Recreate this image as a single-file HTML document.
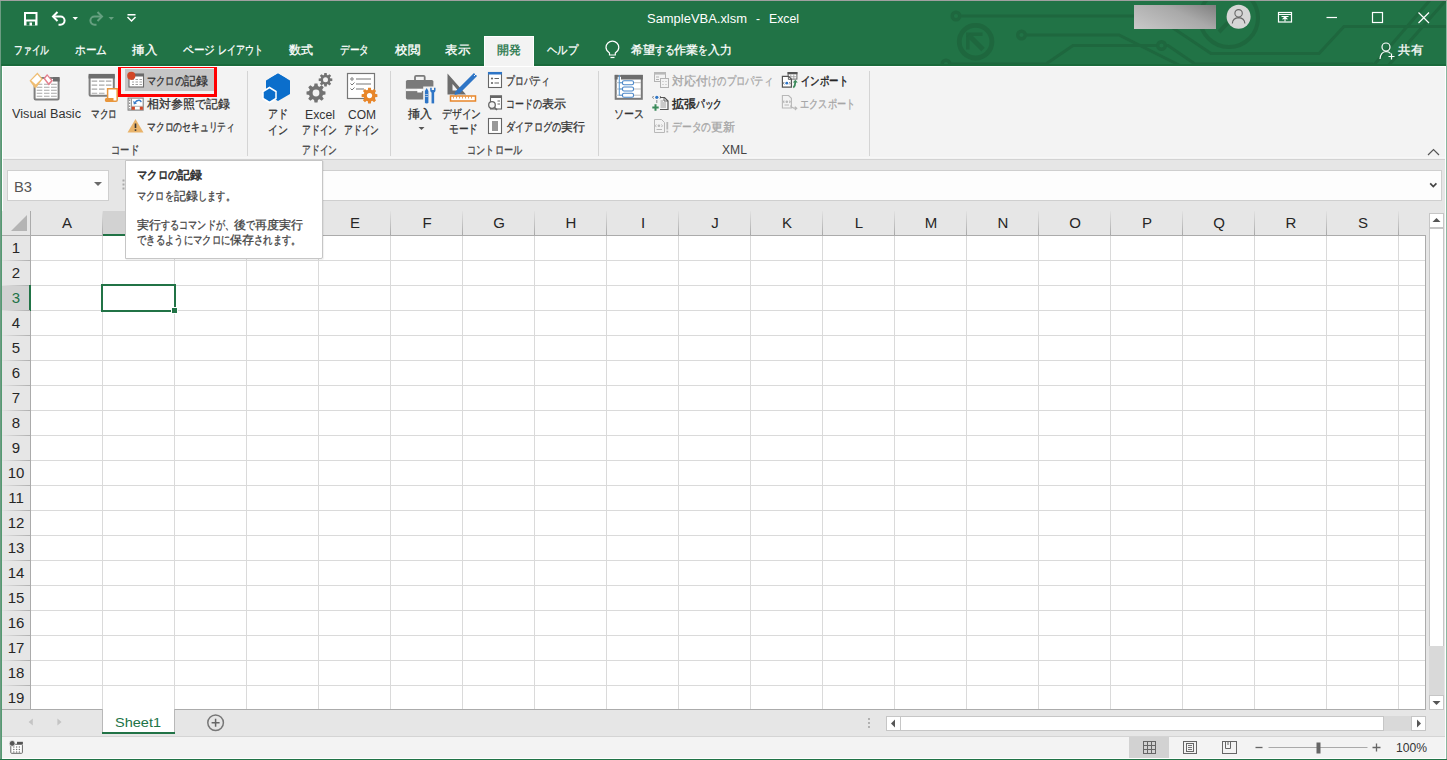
<!DOCTYPE html>
<html lang="ja"><head><meta charset="utf-8"><style>
*{box-sizing:border-box}
html,body{margin:0;padding:0;width:1447px;height:760px;overflow:hidden;background:#fff}
body{position:relative;font-family:"Liberation Sans",sans-serif;font-size:12px;color:#262626}
.a{position:absolute}
svg.a{overflow:visible}
.t{position:absolute;white-space:nowrap;line-height:1;transform-origin:0 0}
.j{-webkit-text-stroke:0.3px currentColor}
</style></head><body>
<div class="a" style="left:0;top:0;width:1447px;height:66px;background:#217346"></div>
<svg class="a" style="left:0;top:0" width="1447" height="66" fill="none" stroke="#1e673e" stroke-width="3">
<circle cx="956" cy="16" r="3.8" stroke-width="3.4"/>
<path d="M960.5 16 H1155 L1211 53.5 H1319 L1344 26.5 H1447"/>
<circle cx="975.6" cy="41.7" r="16.3" stroke-width="4.8"/>
<path d="M967.8 49.5 V34.3 H982.5" stroke-width="3.6"/>
<path d="M968.5 35 L983 49.5" stroke-width="5"/>
<circle cx="1021.5" cy="35" r="3.8" stroke-width="3.4"/>
<path d="M1026 35 H1119 L1181 66"/>
<circle cx="946" cy="64" r="3.8" stroke-width="3.4"/>
<path d="M950.5 64 H1046 L1073 45.5 H1157 M1166 45.5 H1168 L1195 64 H1373"/>
<circle cx="1161.5" cy="45.5" r="3.8" stroke-width="3.4"/>
<circle cx="1229" cy="18" r="29" stroke-width="4"/>
<path d="M1219 32 L1240 10" stroke-width="4"/>
<path d="M1373 66 L1430 0 M1388 66 L1446 0"/>
</svg>
<div class="a" style="left:0;top:0;width:1447px;height:1px;background:#a0a0a0"></div>
<svg class="a" style="left:0;top:0" width="150" height="33">
<path d="M24 12 H37.5 V25.5 H24 Z" fill="#fff"/>
<rect x="26" y="14" width="9.5" height="5.5" fill="#217346"/>
<rect x="26.5" y="21.5" width="8.5" height="4" fill="#217346"/>
<rect x="29.5" y="22.5" width="2.5" height="3" fill="#fff"/>
<path d="M53.5 16.5 H60.5 A4.1 4.1 0 0 1 60.5 24.7 H58.5" fill="none" stroke="#fff" stroke-width="2"/>
<path d="M57.5 12 L53 16.5 L57.5 21" fill="none" stroke="#fff" stroke-width="2"/>
<path d="M72.5 17 H78 L75.25 20 Z" fill="#fff"/>
<path d="M101.5 16.5 H94.5 A4.1 4.1 0 0 0 94.5 24.7 H96.5" fill="none" stroke="#66a080" stroke-width="2"/>
<path d="M97.5 12 L102 16.5 L97.5 21" fill="none" stroke="#66a080" stroke-width="2"/>
<path d="M108.5 17 H114 L111.25 20 Z" fill="#66a080"/>
<rect x="127.5" y="14" width="8" height="1.5" fill="#fff"/>
<path d="M127.5 17 L131.5 21 L135.5 17" fill="none" stroke="#fff" stroke-width="1.5"/>
</svg>
<span class="t" style="left:647px;top:13px;font-size:12px;color:#fff;transform:scaleX(1.0787);">SampleVBA.xlsm</span>
<span class="t" style="left:756px;top:13px;font-size:12px;color:#fff;">-</span>
<span class="t" style="left:769px;top:13px;font-size:12px;color:#fff;transform:scaleX(1.0224);">Excel</span>
<div class="a" style="left:1134px;top:5px;width:82px;height:24px;background:linear-gradient(205deg,#7f7f7f 0%,#a9a9a9 40%,#c9c9c9 100%)"></div>
<svg class="a" style="left:1220px;top:0" width="40" height="34">
<circle cx="18.6" cy="16.8" r="12" fill="#d6d6d6"/>
<circle cx="18.6" cy="13.3" r="3.7" fill="none" stroke="#666" stroke-width="1.1"/>
<path d="M12.3 23.5 Q12.8 17.8 18.6 17.6 Q24.4 17.8 24.9 23.5" fill="none" stroke="#666" stroke-width="1.1"/>
</svg>
<svg class="a" style="left:1270px;top:0" width="177" height="66" fill="none" stroke="#fff">
<rect x="8.5" y="12.5" width="13" height="9.5" stroke-width="1.2"/>
<path d="M9 14.5 H21.5" stroke-width="1"/>
<path d="M11.5 16.5 H18.5 M15 21.5 V17 M12.6 19.3 L15 16.9 L17.4 19.3" stroke-width="1.1"/>
<path d="M56.5 17.5 H67" stroke-width="1.2"/>
<rect x="102.5" y="12.5" width="10" height="10" stroke-width="1.2"/>
<path d="M148.5 12.5 L159 23 M159 12.5 L148.5 23" stroke-width="1.2"/>
<circle cx="116" cy="47" r="4" stroke-width="1.2"/>
<path d="M110 59 Q110.5 52 116 51.5 Q119 51.5 120.5 53.5" stroke-width="1.2"/>
<path d="M118.5 56.5 H124.5 M121.5 53.5 V59.5" stroke-width="1.2"/>
</svg>
<span class="t j" style="left:1398px;top:44px;font-size:12px;color:#fff;transform:scaleX(1.0417);">共有</span>
<span class="t j" style="left:14px;top:44px;font-size:12px;color:#fff;"><span style="display:inline-block;width:35.00px"><span style="display:inline-block;transform:scaleX(0.7292);transform-origin:0 0">ファイル</span></span></span>
<span class="t j" style="left:75px;top:44px;font-size:12px;color:#fff;"><span style="display:inline-block;width:32.00px"><span style="display:inline-block;transform:scaleX(0.8889);transform-origin:0 0">ホーム</span></span></span>
<span class="t j" style="left:132px;top:44px;font-size:12px;color:#fff;transform:scaleX(1.0417);">挿入</span>
<span class="t j" style="left:183px;top:44px;font-size:12px;color:#fff;"><span style="display:inline-block;width:32.00px"><span style="display:inline-block;transform:scaleX(0.8889);transform-origin:0 0">ページ</span></span></span>
<span class="t j" style="left:218px;top:44px;font-size:12px;color:#fff;"><span style="display:inline-block;width:45.00px"><span style="display:inline-block;transform:scaleX(0.7500);transform-origin:0 0">レイアウト</span></span></span>
<span class="t j" style="left:289px;top:44px;font-size:12px;color:#fff;transform:scaleX(1.0000);">数式</span>
<span class="t j" style="left:340px;top:44px;font-size:12px;color:#fff;"><span style="display:inline-block;width:29.00px"><span style="display:inline-block;transform:scaleX(0.8056);transform-origin:0 0">データ</span></span></span>
<span class="t j" style="left:395px;top:44px;font-size:12px;color:#fff;transform:scaleX(1.0417);">校閲</span>
<span class="t j" style="left:445px;top:44px;font-size:12px;color:#fff;transform:scaleX(1.0417);">表示</span>
<span class="t j" style="left:547px;top:44px;font-size:12px;color:#fff;"><span style="display:inline-block;width:31.00px"><span style="display:inline-block;transform:scaleX(0.8611);transform-origin:0 0">ヘルプ</span></span></span>
<svg class="a" style="left:600px;top:36px" width="24" height="26" fill="none" stroke="#fff" stroke-width="1.2">
<path d="M9.5 19 V17 Q6 14.5 6 11.5 A6.4 6.4 0 0 1 18.8 11.5 Q18.8 14.5 15.3 17 V19 Z"/>
<path d="M10.5 21.5 H14.5"/>
</svg>
<span class="t j" style="left:631px;top:44px;font-size:12px;color:#fff;">希望<span style="display:inline-block;width:19.33px"><span style="display:inline-block;transform:scaleX(0.8056);transform-origin:0 0">する</span></span>作業<span style="display:inline-block;width:9.67px"><span style="display:inline-block;transform:scaleX(0.8056);transform-origin:0 0">を</span></span>入力</span>
<div class="a" style="left:0;top:65px;width:1447px;height:94px;background:#f3f3f3"></div>
<div class="a" style="left:0;top:159px;width:1447px;height:1px;background:#d2d2d2"></div>
<div class="a" style="left:0;top:157px;width:1447px;height:1px;background:#f7f7f7"></div>
<div class="a" style="left:247px;top:71px;width:1px;height:85px;background:#d4d4d4"></div>
<div class="a" style="left:390px;top:71px;width:1px;height:85px;background:#d4d4d4"></div>
<div class="a" style="left:598px;top:71px;width:1px;height:85px;background:#d4d4d4"></div>
<div class="a" style="left:869px;top:71px;width:1px;height:85px;background:#d4d4d4"></div>
<span class="t j" style="left:111px;top:144px;font-size:12px;color:#444;"><span style="display:inline-block;width:28.00px"><span style="display:inline-block;transform:scaleX(0.7778);transform-origin:0 0">コード</span></span></span>
<span class="t j" style="left:302px;top:144px;font-size:12px;color:#444;"><span style="display:inline-block;width:35.00px"><span style="display:inline-block;transform:scaleX(0.7292);transform-origin:0 0">アドイン</span></span></span>
<span class="t j" style="left:467px;top:144px;font-size:12px;color:#444;"><span style="display:inline-block;width:55.00px"><span style="display:inline-block;transform:scaleX(0.7639);transform-origin:0 0">コントロール</span></span></span>
<span class="t" style="left:722px;top:144px;font-size:12px;color:#444;transform:scaleX(1.0127);">XML</span>
<svg class="a" style="left:1426px;top:146px" width="16" height="12"><path d="M2 9 L7.5 3.5 L13 9" fill="none" stroke="#555" stroke-width="1.2"/></svg>
<svg class="a" style="left:0;top:0" width="130" height="110">
<rect x="34.6" y="78" width="24" height="21.5" rx="1" fill="#fff" stroke="#7f7f7f" stroke-width="2"/>
<rect x="53" y="77" width="6.6" height="4.5" fill="#6d6d6d"/>
<path d="M36.7 84.2 H42.3 M44 84.2 H49.5 M51 84.2 H56.8 M36.7 87.2 H42.3 M44 87.2 H49.5 M51 87.2 H56.8 M36.7 90.3 H42.3 M44 90.3 H49.5 M51 90.3 H56.8 M36.7 93.2 H42.3 M44 93.2 H49.5 M51 93.2 H56.8 M36.7 96.2 H42.3 M44 96.2 H49.5 M51 96.2 H56.8" stroke="#a8a8a8" stroke-width="1.1"/>
<path d="M37.4 72.5 L42.8 79 L35.4 88.7 L29.5 80.8 Z" fill="#efbd72"/>
<path d="M37.3 74.6 L41.2 79 L35.8 84.5 L31.3 80.5 Z" fill="#fff"/>
<path d="M47.1 73.9 L53 80.8 L48.8 85.6 L43.3 78.4 Z" fill="#e47f8e"/>
<path d="M47.2 76 L51 80.6 L48.7 83 L45.2 78.4 Z" fill="#fff"/>
<rect x="89.6" y="74.9" width="24.2" height="20.8" rx="1" fill="#fff" stroke="#7f7f7f" stroke-width="2"/>
<rect x="88.6" y="73.9" width="26.2" height="4.6" fill="#6d6d6d"/>
<path d="M91.7 81.1 H97.2 M99 81.1 H104.5 M105.9 81.1 H111.4 M91.7 85.1 H97.2 M99 85.1 H104.5 M105.9 85.1 H111.4 M91.7 89.1 H97.2 M99 89.1 H104.5 M91.7 93.2 H97.2 M99 93.2 H104.5" stroke="#a8a8a8" stroke-width="1.1"/>
<path d="M107.6 88.8 H117.2 V100 Q117.2 101.3 116 101.3 H107.6 Z" fill="#fff" stroke="#e8963c" stroke-width="1.5"/>
<path d="M106.3 98 H113.5 V101.9 H106.3 Q104.8 101.9 104.8 100 Q104.8 98 106.3 98 Z" fill="#e8963c"/>
</svg>
<span class="t" style="left:12px;top:108px;font-size:12px;color:#333;transform:scaleX(1.0590);">Visual Basic</span>
<span class="t j" style="left:91px;top:108px;font-size:12px;color:#333;"><span style="display:inline-block;width:26.00px"><span style="display:inline-block;transform:scaleX(0.7222);transform-origin:0 0">マクロ</span></span></span>
<div class="a" style="left:118px;top:65px;width:99px;height:32px;border:3px solid #ff0000"></div>
<div class="a" style="left:125px;top:69px;width:89px;height:22px;background:#c6c6c6"></div>
<svg class="a" style="left:126px;top:70px" width="20" height="20">
<rect x="3" y="4" width="14.5" height="13" fill="#fff" stroke="#6b6b6b" stroke-width="1.1"/>
<rect x="3" y="4" width="14.5" height="2.5" fill="#6b6b6b"/>
<path d="M6 9.5 H8 M9.5 9.5 H12 M13.5 9.5 H16 M6 12 H8 M9.5 12 H12 M13.5 12 H16 M6 14.5 H8 M9.5 14.5 H12 M13.5 14.5 H16" stroke="#999" stroke-width="0.9"/>
<circle cx="5.3" cy="5.8" r="4.1" fill="#d24726"/>
</svg>
<span class="t j" style="left:147px;top:75px;font-size:12px;color:#333;"><span style="display:inline-block;width:37.00px"><span style="display:inline-block;transform:scaleX(0.7708);transform-origin:0 0">マクロの</span></span>記録</span>
<svg class="a" style="left:0;top:0" width="150" height="115">
<rect x="128.1" y="98.1" width="15.1" height="12" fill="#fff" stroke="#808080" stroke-width="1.1"/>
<path d="M131.3 98.5 V110" stroke="#808080" stroke-width="1"/>
<path d="M129.6 99.5 V101 M129.6 102.5 V104 M129.6 105.5 V107 M129.6 108.3 V109.5" stroke="#909090" stroke-width="1.3"/>
<path d="M131.5 106.3 H142.8" stroke="#a0a0a0" stroke-width="0.8"/>
<rect x="131.7" y="106.7" width="3.2" height="3.1" fill="#d24726"/>
<rect x="139.8" y="106.7" width="3.1" height="3.1" fill="#d24726"/>
<path d="M134.6 103.2 Q136.5 100 139.2 100.3 Q140.8 100.6 141.2 102.2" fill="none" stroke="#3b7dc9" stroke-width="1.4"/>
<path d="M133.2 100.8 L133.8 104.6 L137 103.4 Z" fill="#3b7dc9"/>
</svg>
<span class="t j" style="left:147px;top:98px;font-size:12px;color:#333;">相対参照<span style="display:inline-block;width:11.00px"><span style="display:inline-block;transform:scaleX(0.9167);transform-origin:0 0">で</span></span>記録</span>
<svg class="a" style="left:126px;top:116px" width="20" height="18">
<path d="M9.5 3 L17.5 16.5 H1.5 Z" fill="#e9b36a"/>
<path d="M9.5 7.5 V12" stroke="#333" stroke-width="1.6"/>
<rect x="8.7" y="13.3" width="1.6" height="1.6" fill="#333"/>
</svg>
<span class="t j" style="left:147px;top:121px;font-size:12px;color:#333;"><span style="display:inline-block;width:88.00px"><span style="display:inline-block;transform:scaleX(0.7333);transform-origin:0 0">マクロのセキュリティ</span></span></span>
<svg class="a" style="left:258px;top:70px" width="36" height="34">
<path d="M20 3.5 L28.5 8.5 V19 L20 24.5 L11.5 19 V8.5 Z" fill="#0b6ecb" transform="translate(0,0) scale(1)"/>
<path d="M20 3.5 L32 10.5 V24 L20 31 L8 24 V10.5 Z" fill="#0b6ecb"/>
<path d="M11.5 17.5 L18 21.5 V28.5 L11.5 32.5 L5 28.5 V21.5 Z" fill="#0b6ecb" stroke="#fff" stroke-width="1.5"/>
</svg>
<span class="t j" style="left:268px;top:108px;font-size:12px;color:#333;"><span style="display:inline-block;width:20.00px"><span style="display:inline-block;transform:scaleX(0.8333);transform-origin:0 0">アド</span></span></span>
<span class="t j" style="left:268px;top:124px;font-size:12px;color:#333;"><span style="display:inline-block;width:20.00px"><span style="display:inline-block;transform:scaleX(0.8333);transform-origin:0 0">イン</span></span></span>
<svg class="a" style="left:0;top:0" width="400" height="110">
<polygon points="313.98,86.40 314.50,83.52 317.50,83.52 318.02,86.40 319.24,86.91 321.64,85.23 323.77,87.36 322.09,89.76 322.60,90.98 325.48,91.50 325.48,94.50 322.60,95.02 322.09,96.24 323.77,98.64 321.64,100.77 319.24,99.09 318.02,99.60 317.50,102.48 314.50,102.48 313.98,99.60 312.76,99.09 310.36,100.77 308.23,98.64 309.91,96.24 309.40,95.02 306.52,94.50 306.52,91.50 309.40,90.98 309.91,89.76 308.23,87.36 310.36,85.23 312.76,86.91" fill="#737373"/><circle cx="316" cy="93" r="7" fill="#737373"/><circle cx="316" cy="93" r="3.4" fill="#f3f3f3"/>
<polygon points="324.02,75.23 324.30,73.00 326.70,73.00 326.98,75.23 327.68,75.52 329.46,74.15 331.15,75.84 329.78,77.62 330.07,78.32 332.30,78.60 332.30,81.00 330.07,81.28 329.78,81.98 331.15,83.76 329.46,85.45 327.68,84.08 326.98,84.37 326.70,86.60 324.30,86.60 324.02,84.37 323.32,84.08 321.54,85.45 319.85,83.76 321.22,81.98 320.93,81.28 318.70,81.00 318.70,78.60 320.93,78.32 321.22,77.62 319.85,75.84 321.54,74.15 323.32,75.52" fill="#737373"/><circle cx="325.5" cy="79.8" r="4.8" fill="#737373"/><circle cx="325.5" cy="79.8" r="2.5" fill="#f3f3f3"/>
</svg>
<span class="t" style="left:305px;top:109px;font-size:12px;color:#333;transform:scaleX(1.0224);">Excel</span>
<span class="t j" style="left:302px;top:124px;font-size:12px;color:#333;"><span style="display:inline-block;width:35.00px"><span style="display:inline-block;transform:scaleX(0.7292);transform-origin:0 0">アドイン</span></span></span>
<svg class="a" style="left:343px;top:70px" width="40" height="34">
<rect x="4.5" y="3.5" width="27" height="25" fill="#fff" stroke="#777" stroke-width="1.2"/>
<circle cx="9" cy="9" r="1.2" fill="none" stroke="#777"/>
<path d="M13 9 H28 M13 14 H28 M13 19 H21" stroke="#777" stroke-width="1.1"/>
<path d="M7.5 13.5 L9 15 L11.5 12.5 M7.5 18.5 L9 20 L11.5 17.5" fill="none" stroke="#777" stroke-width="1"/>
<polygon points="24.77,20.27 25.11,17.72 27.89,17.72 28.23,20.27 29.04,20.61 31.09,19.05 33.05,21.01 31.49,23.06 31.83,23.87 34.38,24.21 34.38,26.99 31.83,27.33 31.49,28.14 33.05,30.19 31.09,32.15 29.04,30.59 28.23,30.93 27.89,33.48 25.11,33.48 24.77,30.93 23.96,30.59 21.91,32.15 19.95,30.19 21.51,28.14 21.17,27.33 18.62,26.99 18.62,24.21 21.17,23.87 21.51,23.06 19.95,21.01 21.91,19.05 23.96,20.61" fill="#e8862a"/><circle cx="26.5" cy="25.6" r="5.8" fill="#e8862a"/>
<circle cx="26.5" cy="25.6" r="2.6" fill="#fff"/>
</svg>
<span class="t" style="left:348px;top:109px;font-size:12px;color:#333;transform:scaleX(1.0000);">COM</span>
<span class="t j" style="left:344px;top:124px;font-size:12px;color:#333;"><span style="display:inline-block;width:35.00px"><span style="display:inline-block;transform:scaleX(0.7292);transform-origin:0 0">アドイン</span></span></span>
<svg class="a" style="left:0;top:0" width="450" height="110">
<path d="M415 80 V77 Q415 75.9 416.1 75.9 H423.6 Q424.7 75.9 424.7 77 V80" fill="none" stroke="#7a7a7a" stroke-width="1.8"/>
<rect x="405.9" y="80" width="27.5" height="19.4" rx="1.6" fill="#7a7a7a"/>
<rect x="405.9" y="88.7" width="27.5" height="2.4" fill="#f3f3f3"/>
<rect x="417.3" y="89" width="4.5" height="3.5" fill="#fff"/>
<path d="M423.2 86.5 H437 V104.5 H423.2 Z" fill="#f3f3f3"/>
<path d="M426.65 88 L428.4 91 V102.2 Q428.4 103.4 426.65 103.4 Q424.9 103.4 424.9 102.2 V91 Z" fill="#2e75c6"/>
<path d="M425.3 94.5 H428 M425.3 96.5 H428" stroke="#f3f3f3" stroke-width="0.6"/>
<path d="M432.85 92 V103.4" stroke="#2e75c6" stroke-width="2.6"/>
<path d="M430.2 87.8 V90.2 Q430.2 92.6 432.85 92.6 Q435.5 92.6 435.5 90.2 V87.8 H434 V90 H431.7 V87.8 Z" fill="#2e75c6"/>
</svg>
<span class="t j" style="left:408px;top:108px;font-size:12px;color:#333;transform:scaleX(1.0000);">挿入</span>
<svg class="a" style="left:418px;top:126px" width="8" height="6"><path d="M0.5 1 H6.5 L3.5 4 Z" fill="#555"/></svg>
<svg class="a" style="left:444px;top:70px" width="40" height="36">
<path d="M3.5 3.5 L22 24.5 H3.5 Z M8.5 14 V20.5 H14 Z" fill="#6d6d6d" fill-rule="evenodd"/>
<rect x="6.5" y="26" width="25" height="5" fill="#fff" stroke="#e8862a" stroke-width="1.5"/>
<path d="M9.5 26.5 V28.5 M12.5 26.5 V28.5 M15.5 26.5 V28.5 M18.5 26.5 V28.5 M21.5 26.5 V28.5 M24.5 26.5 V28.5 M27.5 26.5 V28.5" stroke="#e8862a" stroke-width="0.8"/>
<path d="M31.5 4.5 L13.5 22.5" stroke="#2e75c6" stroke-width="4.5"/>
<path d="M11.5 21 L10.5 25 L14.5 24" fill="#2e75c6"/>
<path d="M30 6 L33 3" stroke="#f3f3f3" stroke-width="1"/>
</svg>
<span class="t j" style="left:442px;top:108px;font-size:12px;color:#333;"><span style="display:inline-block;width:39.00px"><span style="display:inline-block;transform:scaleX(0.8125);transform-origin:0 0">デザイン</span></span></span>
<span class="t j" style="left:449px;top:123px;font-size:12px;color:#333;"><span style="display:inline-block;width:29.00px"><span style="display:inline-block;transform:scaleX(0.8056);transform-origin:0 0">モード</span></span></span>
<svg class="a" style="left:485px;top:70px" width="20" height="66">
<rect x="3.5" y="2.5" width="13" height="15" fill="#fff" stroke="#666" stroke-width="1.1"/>
<rect x="3" y="2" width="14" height="2.5" fill="#2e75c6"/>
<circle cx="7" cy="8.5" r="1.1" fill="#666"/><circle cx="7" cy="13" r="1.1" fill="#666"/>
<path d="M9.5 8.5 H14 M9.5 13 H14" stroke="#666" stroke-width="1.1"/>
<rect x="5.5" y="26" width="11" height="13" fill="#fff" stroke="#666" stroke-width="1.1"/>
<rect x="5" y="25.5" width="12" height="2.5" fill="#666"/>
<path d="M12.5 31 H15 M12.5 34 H15" stroke="#666" stroke-width="1"/>
<circle cx="7" cy="35" r="3.3" fill="#f3f3f3" stroke="#666" stroke-width="1.3"/>
<path d="M9.3 37.3 L12 40" stroke="#666" stroke-width="1.6"/>
<rect x="3.5" y="48.5" width="13" height="15" fill="#fff" stroke="#666" stroke-width="1.1"/>
<rect x="7" y="51" width="6" height="10" fill="#9a9a9a"/>
</svg>
<span class="t j" style="left:506px;top:75px;font-size:12px;color:#333;"><span style="display:inline-block;width:44.00px"><span style="display:inline-block;transform:scaleX(0.7333);transform-origin:0 0">プロパティ</span></span></span>
<span class="t j" style="left:506px;top:98px;font-size:12px;color:#333;"><span style="display:inline-block;width:36.00px"><span style="display:inline-block;transform:scaleX(0.7500);transform-origin:0 0">コードの</span></span>表示</span>
<span class="t j" style="left:506px;top:121px;font-size:12px;color:#333;"><span style="display:inline-block;width:55.00px"><span style="display:inline-block;transform:scaleX(0.7639);transform-origin:0 0">ダイアログの</span></span>実行</span>
<svg class="a" style="left:0;top:0" width="700" height="110">
<rect x="615.7" y="75.9" width="26.1" height="22.9" fill="#fff" stroke="#7a7a7a" stroke-width="2"/>
<rect x="621" y="74.9" width="21.8" height="4.6" fill="#6d6d6d"/>
<rect x="614.7" y="74.9" width="3" height="4.6" fill="#6d6d6d"/>
<path d="M616 82.7 H641 M616 89 H641 M616 95.2 H641" stroke="#bdbdbd" stroke-width="1"/>
<path d="M619.3 75 V95.2 H622.5 M619.3 82.7 H622.5 M619.3 89 H622.5" fill="none" stroke="#5b9bd5" stroke-width="1.1"/>
<rect x="622.5" y="80.7" width="11" height="4" rx="1.5" fill="#fff" stroke="#4a86c8" stroke-width="1.1"/>
<rect x="622.5" y="87" width="11" height="4" rx="1.5" fill="#fff" stroke="#4a86c8" stroke-width="1.1"/>
<rect x="622.5" y="93.2" width="11" height="4" rx="1.5" fill="#fff" stroke="#4a86c8" stroke-width="1.1"/>
</svg>
<span class="t j" style="left:614px;top:108px;font-size:12px;color:#333;"><span style="display:inline-block;width:30.00px"><span style="display:inline-block;transform:scaleX(0.8333);transform-origin:0 0">ソース</span></span></span>
<svg class="a" style="left:0;top:0" width="700" height="140">
<g fill="none" stroke="#b3b3b3" stroke-width="1">
<rect x="654.5" y="72.5" width="11" height="9"/>
<rect x="660.5" y="78.5" width="8" height="9" fill="#f3f3f3"/>
<path d="M656 77 H659 M656 79.5 H659 M662.5 81.5 H663.5 M665.5 81.5 H666.5 M662.5 84.5 H663.5 M665.5 84.5 H666.5"/>
</g>
<rect x="654" y="72" width="12" height="2.6" fill="#b8b8b8"/>
<path d="M653.5 96 L652.6 97.3 L653.5 98.6 M660 96 L660.9 97.3 L660 98.6" fill="none" stroke="#666" stroke-width="0.9"/>
<circle cx="656.8" cy="97.3" r="1.6" fill="#2e75c6"/>
<path d="M656.8 100 V103" stroke="#888" stroke-width="1"/>
<path d="M660 97.5 H664.5 L668 101 V109.5 H660" fill="none" stroke="#555" stroke-width="1.2"/>
<path d="M664 97.5 V101 H668" fill="none" stroke="#555" stroke-width="0.9"/>
<path d="M660.5 101 H663 M660.5 103 H666 M660.5 105 H666 M660.5 107 H666" stroke="#888" stroke-width="0.8"/>
<path d="M655.5 104.3 V110.7 M652.3 107.5 H658.7" stroke="#3a8a5a" stroke-width="2"/>
<g fill="none" stroke="#b8b8b8" stroke-width="1">
<path d="M654.5 119.5 H661.5 L664.5 122.5 V132.5 H654.5 Z"/>
<path d="M656.3 124.5 L655.4 125.8 L656.3 127.1 M661.5 124.5 L662.4 125.8 L661.5 127.1 M656.5 129.5 H662"/>
</g>
<circle cx="658.9" cy="125.8" r="1.3" fill="#b8b8b8"/>
<path d="M667.3 122 V129.5" stroke="#b8b8b8" stroke-width="1.8"/><rect x="666.4" y="130.7" width="1.8" height="1.8" fill="#b8b8b8"/>
</svg>
<span class="t j" style="left:672px;top:75px;font-size:12px;color:#a6a6a6;">対応付<span style="display:inline-block;width:65.00px"><span style="display:inline-block;transform:scaleX(0.7738);transform-origin:0 0">けのプロパティ</span></span></span>
<span class="t j" style="left:672px;top:98px;font-size:12px;color:#262626;-webkit-text-stroke:0.45px currentColor">拡張<span style="display:inline-block;width:26.00px"><span style="display:inline-block;transform:scaleX(0.7222);transform-origin:0 0">パック</span></span></span>
<span class="t j" style="left:672px;top:121px;font-size:12px;color:#a6a6a6;"><span style="display:inline-block;width:39.00px"><span style="display:inline-block;transform:scaleX(0.8125);transform-origin:0 0">データの</span></span>更新</span>
<svg class="a" style="left:0;top:0" width="810" height="115">
<rect x="788.1" y="72.5" width="8.8" height="6.6" fill="#fff" stroke="#666" stroke-width="1"/>
<rect x="787.6" y="72" width="9.8" height="2.3" fill="#555"/>
<path d="M790.8 74.5 V79 M793.8 74.5 V79 M788.5 76.7 H796.5" stroke="#999" stroke-width="0.8"/>
<path d="M782.4 76.4 H788.6 L791.4 79.2 V87.2 H782.4 Z" fill="#fff" stroke="#555" stroke-width="1.2"/>
<path d="M788.4 76.5 V79.4 H791.3" fill="none" stroke="#555" stroke-width="0.9"/>
<path d="M784.3 82 L783.3 83.2 L784.3 84.4 M789.3 82 L790.3 83.2 L789.3 84.4" fill="none" stroke="#666" stroke-width="0.9"/>
<circle cx="786.8" cy="83.2" r="1.4" fill="#2e75c6"/>
<path d="M793.3 87.6 Q795.3 86 795.3 82" fill="none" stroke="#3a8a5a" stroke-width="1.8"/>
<path d="M792.8 82.6 L795.3 79.8 L797.8 82.6 Z" fill="#3a8a5a"/>
<g fill="none" stroke="#b8b8b8" stroke-width="1.1">
<path d="M782.4 95.5 H788.6 L791.4 98.3 V108 H782.4 Z"/>
<path d="M784.3 100.6 L783.3 101.8 L784.3 103 M789.3 100.6 L790.3 101.8 L789.3 103 M784.5 105 H789"/>
<path d="M790.5 105.5 Q791.5 108.3 796 108.3 M794.8 106.6 L796.8 108.3 L794.8 110"/>
</g>
<circle cx="786.8" cy="101.8" r="1.3" fill="#b8b8b8"/>
</svg>
<span class="t j" style="left:801px;top:75px;font-size:12px;color:#262626;-webkit-text-stroke:0.45px currentColor"><span style="display:inline-block;width:47.00px"><span style="display:inline-block;transform:scaleX(0.7833);transform-origin:0 0">インポート</span></span></span>
<span class="t j" style="left:800px;top:98px;font-size:12px;color:#a6a6a6;"><span style="display:inline-block;width:55.00px"><span style="display:inline-block;transform:scaleX(0.7639);transform-origin:0 0">エクスポート</span></span></span>
<div class="a" style="left:0;top:160px;width:1447px;height:51px;background:#e6e6e6"></div>
<div class="a" style="left:7px;top:170px;width:102px;height:31px;background:#fdfdfd;border:1px solid #cfcfcf"></div>
<span class="t" style="left:14px;top:179px;font-size:15px;color:#555;transform:scaleX(0.9804);">B3</span>
<div class="a" style="left:94px;top:182px;width:0;height:0;border-left:4px solid transparent;border-right:4px solid transparent;border-top:4px solid #6a6a6a"></div>
<svg class="a" style="left:121px;top:178px" width="5" height="14"><rect x="1.5" y="1.5" width="2" height="2" fill="#aaa"/><rect x="1.5" y="5.5" width="2" height="2" fill="#aaa"/><rect x="1.5" y="9.5" width="2" height="2" fill="#aaa"/></svg>
<div class="a" style="left:196px;top:170px;width:1246px;height:31px;background:#fdfdfd;border:1px solid #cfcfcf"></div>
<svg class="a" style="left:1425px;top:180px" width="14" height="10"><path d="M5.2 3.3 L8.3 6.5 L11.4 3.3" fill="none" stroke="#444" stroke-width="1.7"/></svg>
<div class="a" style="left:31px;top:236px;width:1395px;height:474px;background:#fff"></div>
<div class="a" style="left:102px;top:236px;width:1px;height:474px;background:#dadada"></div>
<div class="a" style="left:174px;top:236px;width:1px;height:474px;background:#dadada"></div>
<div class="a" style="left:246px;top:236px;width:1px;height:474px;background:#dadada"></div>
<div class="a" style="left:318px;top:236px;width:1px;height:474px;background:#dadada"></div>
<div class="a" style="left:390px;top:236px;width:1px;height:474px;background:#dadada"></div>
<div class="a" style="left:462px;top:236px;width:1px;height:474px;background:#dadada"></div>
<div class="a" style="left:534px;top:236px;width:1px;height:474px;background:#dadada"></div>
<div class="a" style="left:606px;top:236px;width:1px;height:474px;background:#dadada"></div>
<div class="a" style="left:678px;top:236px;width:1px;height:474px;background:#dadada"></div>
<div class="a" style="left:750px;top:236px;width:1px;height:474px;background:#dadada"></div>
<div class="a" style="left:822px;top:236px;width:1px;height:474px;background:#dadada"></div>
<div class="a" style="left:894px;top:236px;width:1px;height:474px;background:#dadada"></div>
<div class="a" style="left:966px;top:236px;width:1px;height:474px;background:#dadada"></div>
<div class="a" style="left:1038px;top:236px;width:1px;height:474px;background:#dadada"></div>
<div class="a" style="left:1110px;top:236px;width:1px;height:474px;background:#dadada"></div>
<div class="a" style="left:1182px;top:236px;width:1px;height:474px;background:#dadada"></div>
<div class="a" style="left:1254px;top:236px;width:1px;height:474px;background:#dadada"></div>
<div class="a" style="left:1326px;top:236px;width:1px;height:474px;background:#dadada"></div>
<div class="a" style="left:1398px;top:236px;width:1px;height:474px;background:#dadada"></div>
<div class="a" style="left:31px;top:260px;width:1395px;height:1px;background:#dadada"></div>
<div class="a" style="left:31px;top:285px;width:1395px;height:1px;background:#dadada"></div>
<div class="a" style="left:31px;top:310px;width:1395px;height:1px;background:#dadada"></div>
<div class="a" style="left:31px;top:335px;width:1395px;height:1px;background:#dadada"></div>
<div class="a" style="left:31px;top:360px;width:1395px;height:1px;background:#dadada"></div>
<div class="a" style="left:31px;top:385px;width:1395px;height:1px;background:#dadada"></div>
<div class="a" style="left:31px;top:410px;width:1395px;height:1px;background:#dadada"></div>
<div class="a" style="left:31px;top:435px;width:1395px;height:1px;background:#dadada"></div>
<div class="a" style="left:31px;top:460px;width:1395px;height:1px;background:#dadada"></div>
<div class="a" style="left:31px;top:485px;width:1395px;height:1px;background:#dadada"></div>
<div class="a" style="left:31px;top:510px;width:1395px;height:1px;background:#dadada"></div>
<div class="a" style="left:31px;top:535px;width:1395px;height:1px;background:#dadada"></div>
<div class="a" style="left:31px;top:560px;width:1395px;height:1px;background:#dadada"></div>
<div class="a" style="left:31px;top:585px;width:1395px;height:1px;background:#dadada"></div>
<div class="a" style="left:31px;top:610px;width:1395px;height:1px;background:#dadada"></div>
<div class="a" style="left:31px;top:635px;width:1395px;height:1px;background:#dadada"></div>
<div class="a" style="left:31px;top:660px;width:1395px;height:1px;background:#dadada"></div>
<div class="a" style="left:31px;top:685px;width:1395px;height:1px;background:#dadada"></div>
<div class="a" style="left:31px;top:710px;width:1395px;height:1px;background:#dadada"></div>
<div class="a" style="left:2px;top:211px;width:1424px;height:24px;background:#e6e6e6"></div>
<div class="a" style="left:2px;top:235px;width:1424px;height:1px;background:#ababab"></div>
<div class="a" style="left:2px;top:236px;width:28px;height:474px;background:#e6e6e6"></div>
<div class="a" style="left:30px;top:211px;width:1px;height:499px;background:#ababab"></div>
<div class="a" style="left:1425px;top:235px;width:1px;height:475px;background:#ababab"></div>
<div class="a" style="left:102px;top:211px;width:1px;height:24px;background:linear-gradient(#e2e2e2,#a9a9a9)"></div>
<div class="t" style="left:31px;top:215px;width:72px;text-align:center;font-size:15px;color:#262626">A</div>
<div class="a" style="left:103px;top:211px;width:71px;height:24px;background:#d2d2d2"></div>
<div class="a" style="left:103px;top:234px;width:72px;height:2px;background:#217346"></div>
<div class="a" style="left:174px;top:211px;width:1px;height:24px;background:linear-gradient(#e2e2e2,#a9a9a9)"></div>
<div class="t" style="left:103px;top:215px;width:72px;text-align:center;font-size:15px;color:#217346">B</div>
<div class="a" style="left:246px;top:211px;width:1px;height:24px;background:linear-gradient(#e2e2e2,#a9a9a9)"></div>
<div class="t" style="left:175px;top:215px;width:72px;text-align:center;font-size:15px;color:#262626">C</div>
<div class="a" style="left:318px;top:211px;width:1px;height:24px;background:linear-gradient(#e2e2e2,#a9a9a9)"></div>
<div class="t" style="left:247px;top:215px;width:72px;text-align:center;font-size:15px;color:#262626">D</div>
<div class="a" style="left:390px;top:211px;width:1px;height:24px;background:linear-gradient(#e2e2e2,#a9a9a9)"></div>
<div class="t" style="left:319px;top:215px;width:72px;text-align:center;font-size:15px;color:#262626">E</div>
<div class="a" style="left:462px;top:211px;width:1px;height:24px;background:linear-gradient(#e2e2e2,#a9a9a9)"></div>
<div class="t" style="left:391px;top:215px;width:72px;text-align:center;font-size:15px;color:#262626">F</div>
<div class="a" style="left:534px;top:211px;width:1px;height:24px;background:linear-gradient(#e2e2e2,#a9a9a9)"></div>
<div class="t" style="left:463px;top:215px;width:72px;text-align:center;font-size:15px;color:#262626">G</div>
<div class="a" style="left:606px;top:211px;width:1px;height:24px;background:linear-gradient(#e2e2e2,#a9a9a9)"></div>
<div class="t" style="left:535px;top:215px;width:72px;text-align:center;font-size:15px;color:#262626">H</div>
<div class="a" style="left:678px;top:211px;width:1px;height:24px;background:linear-gradient(#e2e2e2,#a9a9a9)"></div>
<div class="t" style="left:607px;top:215px;width:72px;text-align:center;font-size:15px;color:#262626">I</div>
<div class="a" style="left:750px;top:211px;width:1px;height:24px;background:linear-gradient(#e2e2e2,#a9a9a9)"></div>
<div class="t" style="left:679px;top:215px;width:72px;text-align:center;font-size:15px;color:#262626">J</div>
<div class="a" style="left:822px;top:211px;width:1px;height:24px;background:linear-gradient(#e2e2e2,#a9a9a9)"></div>
<div class="t" style="left:751px;top:215px;width:72px;text-align:center;font-size:15px;color:#262626">K</div>
<div class="a" style="left:894px;top:211px;width:1px;height:24px;background:linear-gradient(#e2e2e2,#a9a9a9)"></div>
<div class="t" style="left:823px;top:215px;width:72px;text-align:center;font-size:15px;color:#262626">L</div>
<div class="a" style="left:966px;top:211px;width:1px;height:24px;background:linear-gradient(#e2e2e2,#a9a9a9)"></div>
<div class="t" style="left:895px;top:215px;width:72px;text-align:center;font-size:15px;color:#262626">M</div>
<div class="a" style="left:1038px;top:211px;width:1px;height:24px;background:linear-gradient(#e2e2e2,#a9a9a9)"></div>
<div class="t" style="left:967px;top:215px;width:72px;text-align:center;font-size:15px;color:#262626">N</div>
<div class="a" style="left:1110px;top:211px;width:1px;height:24px;background:linear-gradient(#e2e2e2,#a9a9a9)"></div>
<div class="t" style="left:1039px;top:215px;width:72px;text-align:center;font-size:15px;color:#262626">O</div>
<div class="a" style="left:1182px;top:211px;width:1px;height:24px;background:linear-gradient(#e2e2e2,#a9a9a9)"></div>
<div class="t" style="left:1111px;top:215px;width:72px;text-align:center;font-size:15px;color:#262626">P</div>
<div class="a" style="left:1254px;top:211px;width:1px;height:24px;background:linear-gradient(#e2e2e2,#a9a9a9)"></div>
<div class="t" style="left:1183px;top:215px;width:72px;text-align:center;font-size:15px;color:#262626">Q</div>
<div class="a" style="left:1326px;top:211px;width:1px;height:24px;background:linear-gradient(#e2e2e2,#a9a9a9)"></div>
<div class="t" style="left:1255px;top:215px;width:72px;text-align:center;font-size:15px;color:#262626">R</div>
<div class="a" style="left:1398px;top:211px;width:1px;height:24px;background:linear-gradient(#e2e2e2,#a9a9a9)"></div>
<div class="t" style="left:1327px;top:215px;width:72px;text-align:center;font-size:15px;color:#262626">S</div>
<div class="a" style="left:2px;top:260px;width:28px;height:1px;background:linear-gradient(90deg,#e2e2e2,#b0b0b0)"></div>
<div class="t" style="left:2px;top:240px;width:28px;text-align:center;font-size:15px;color:#262626">1</div>
<div class="a" style="left:2px;top:285px;width:28px;height:1px;background:linear-gradient(90deg,#e2e2e2,#b0b0b0)"></div>
<div class="t" style="left:2px;top:265px;width:28px;text-align:center;font-size:15px;color:#262626">2</div>
<div class="a" style="left:2px;top:286px;width:28px;height:24px;background:#d2d2d2"></div>
<div class="a" style="left:29px;top:285px;width:2px;height:26px;background:#217346"></div>
<div class="a" style="left:2px;top:310px;width:28px;height:1px;background:linear-gradient(90deg,#e2e2e2,#b0b0b0)"></div>
<div class="t" style="left:2px;top:290px;width:28px;text-align:center;font-size:15px;color:#217346">3</div>
<div class="a" style="left:2px;top:335px;width:28px;height:1px;background:linear-gradient(90deg,#e2e2e2,#b0b0b0)"></div>
<div class="t" style="left:2px;top:315px;width:28px;text-align:center;font-size:15px;color:#262626">4</div>
<div class="a" style="left:2px;top:360px;width:28px;height:1px;background:linear-gradient(90deg,#e2e2e2,#b0b0b0)"></div>
<div class="t" style="left:2px;top:340px;width:28px;text-align:center;font-size:15px;color:#262626">5</div>
<div class="a" style="left:2px;top:385px;width:28px;height:1px;background:linear-gradient(90deg,#e2e2e2,#b0b0b0)"></div>
<div class="t" style="left:2px;top:365px;width:28px;text-align:center;font-size:15px;color:#262626">6</div>
<div class="a" style="left:2px;top:410px;width:28px;height:1px;background:linear-gradient(90deg,#e2e2e2,#b0b0b0)"></div>
<div class="t" style="left:2px;top:390px;width:28px;text-align:center;font-size:15px;color:#262626">7</div>
<div class="a" style="left:2px;top:435px;width:28px;height:1px;background:linear-gradient(90deg,#e2e2e2,#b0b0b0)"></div>
<div class="t" style="left:2px;top:415px;width:28px;text-align:center;font-size:15px;color:#262626">8</div>
<div class="a" style="left:2px;top:460px;width:28px;height:1px;background:linear-gradient(90deg,#e2e2e2,#b0b0b0)"></div>
<div class="t" style="left:2px;top:440px;width:28px;text-align:center;font-size:15px;color:#262626">9</div>
<div class="a" style="left:2px;top:485px;width:28px;height:1px;background:linear-gradient(90deg,#e2e2e2,#b0b0b0)"></div>
<div class="t" style="left:2px;top:465px;width:28px;text-align:center;font-size:15px;color:#262626">10</div>
<div class="a" style="left:2px;top:510px;width:28px;height:1px;background:linear-gradient(90deg,#e2e2e2,#b0b0b0)"></div>
<div class="t" style="left:2px;top:490px;width:28px;text-align:center;font-size:15px;color:#262626">11</div>
<div class="a" style="left:2px;top:535px;width:28px;height:1px;background:linear-gradient(90deg,#e2e2e2,#b0b0b0)"></div>
<div class="t" style="left:2px;top:515px;width:28px;text-align:center;font-size:15px;color:#262626">12</div>
<div class="a" style="left:2px;top:560px;width:28px;height:1px;background:linear-gradient(90deg,#e2e2e2,#b0b0b0)"></div>
<div class="t" style="left:2px;top:540px;width:28px;text-align:center;font-size:15px;color:#262626">13</div>
<div class="a" style="left:2px;top:585px;width:28px;height:1px;background:linear-gradient(90deg,#e2e2e2,#b0b0b0)"></div>
<div class="t" style="left:2px;top:565px;width:28px;text-align:center;font-size:15px;color:#262626">14</div>
<div class="a" style="left:2px;top:610px;width:28px;height:1px;background:linear-gradient(90deg,#e2e2e2,#b0b0b0)"></div>
<div class="t" style="left:2px;top:590px;width:28px;text-align:center;font-size:15px;color:#262626">15</div>
<div class="a" style="left:2px;top:635px;width:28px;height:1px;background:linear-gradient(90deg,#e2e2e2,#b0b0b0)"></div>
<div class="t" style="left:2px;top:615px;width:28px;text-align:center;font-size:15px;color:#262626">16</div>
<div class="a" style="left:2px;top:660px;width:28px;height:1px;background:linear-gradient(90deg,#e2e2e2,#b0b0b0)"></div>
<div class="t" style="left:2px;top:640px;width:28px;text-align:center;font-size:15px;color:#262626">17</div>
<div class="a" style="left:2px;top:685px;width:28px;height:1px;background:linear-gradient(90deg,#e2e2e2,#b0b0b0)"></div>
<div class="t" style="left:2px;top:665px;width:28px;text-align:center;font-size:15px;color:#262626">18</div>
<div class="a" style="left:2px;top:710px;width:28px;height:1px;background:linear-gradient(90deg,#e2e2e2,#b0b0b0)"></div>
<div class="t" style="left:2px;top:690px;width:28px;text-align:center;font-size:15px;color:#262626">19</div>
<svg class="a" style="left:10px;top:214px" width="18" height="18"><polygon points="17,1 17,17 1,17" fill="#b4b4b4"/></svg>
<div class="a" style="left:101px;top:284px;width:75px;height:28px;border:2px solid #217346"></div>
<div class="a" style="left:171px;top:307px;width:7px;height:7px;background:#fff"></div>
<div class="a" style="left:172px;top:308px;width:5px;height:5px;background:#217346"></div>
<div class="a" style="left:1426px;top:211px;width:19px;height:499px;background:#e6e6e6"></div>
<div class="a" style="left:1429px;top:213px;width:15px;height:15px;background:#fff;border:1px solid #c6c6c6"></div>
<svg class="a" style="left:1429px;top:213px" width="15" height="15"><path d="M3.5 9 L7.5 5 L11.5 9 Z" fill="#555"/></svg>
<div class="a" style="left:1429px;top:228px;width:15px;height:419px;background:#fff;border:1px solid #c6c6c6"></div>
<div class="a" style="left:1429px;top:646px;width:15px;height:50px;background:#d9d9d9"></div>
<div class="a" style="left:1429px;top:695px;width:15px;height:15px;background:#fff;border:1px solid #c6c6c6"></div>
<svg class="a" style="left:1429px;top:695px" width="15" height="15"><path d="M3.5 6 L7.5 10 L11.5 6 Z" fill="#555"/></svg>
<div class="a" style="left:125px;top:160px;width:198px;height:99px;background:#fff;border:1px solid #c6c6c6;border-radius:0 0 2px 0;box-shadow:1px 1px 1px rgba(0,0,0,0.06)"></div>
<span class="t j" style="left:137px;top:169px;font-size:12px;color:#333;-webkit-text-stroke:0.6px currentColor"><span style="display:inline-block;width:41.00px"><span style="display:inline-block;transform:scaleX(0.8542);transform-origin:0 0">マクロの</span></span>記録</span>
<span class="t j" style="left:137px;top:190px;font-size:12px;color:#444;"><span style="display:inline-block;width:37.00px"><span style="display:inline-block;transform:scaleX(0.7708);transform-origin:0 0">マクロを</span></span>記録<span style="display:inline-block;width:37.00px"><span style="display:inline-block;transform:scaleX(0.7708);transform-origin:0 0">します。</span></span></span>
<span class="t j" style="left:137px;top:219px;font-size:12px;color:#444;">実行<span style="display:inline-block;width:72.89px"><span style="display:inline-block;transform:scaleX(0.7593);transform-origin:0 0">するコマンドが、</span></span>後<span style="display:inline-block;width:9.11px"><span style="display:inline-block;transform:scaleX(0.7593);transform-origin:0 0">で</span></span>再度実行</span>
<span class="t j" style="left:137px;top:234px;font-size:12px;color:#444;"><span style="display:inline-block;width:93.33px"><span style="display:inline-block;transform:scaleX(0.7778);transform-origin:0 0">できるようにマクロに</span></span>保存<span style="display:inline-block;width:46.67px"><span style="display:inline-block;transform:scaleX(0.7778);transform-origin:0 0">されます。</span></span></span>
<div class="a" style="left:0;top:710px;width:1447px;height:27px;background:#e6e6e6"></div>
<div class="a" style="left:2px;top:709px;width:1424px;height:1px;background:#ababab"></div>
<div class="a" style="left:102px;top:709px;width:73px;height:25px;background:#fff;border-left:1px solid #b8b8b8;border-right:1px solid #b8b8b8"></div>
<div class="a" style="left:102px;top:732px;width:73px;height:2px;background:#217346"></div>
<span class="t" style="left:115px;top:716px;font-size:13px;color:#217346;transform:scaleX(1.1164);">Sheet1</span>
<svg class="a" style="left:0;top:710px" width="80" height="26"><path d="M32.8 8.5 V15.5 L28.6 12 Z" fill="#c4c4c4"/><path d="M57.4 8.5 V15.5 L61.6 12 Z" fill="#c4c4c4"/></svg>
<svg class="a" style="left:205px;top:713px" width="22" height="20"><circle cx="10.6" cy="9.8" r="7.8" fill="none" stroke="#777" stroke-width="1.5"/><path d="M10.6 5.8 V13.8 M6.6 9.8 H14.6" stroke="#666" stroke-width="1.5"/></svg>
<svg class="a" style="left:866px;top:716px" width="6" height="14"><circle cx="3" cy="3" r="0.9" fill="#999"/><circle cx="3" cy="7" r="0.9" fill="#999"/><circle cx="3" cy="11" r="0.9" fill="#999"/></svg>
<div class="a" style="left:886px;top:716px;width:539px;height:15px;background:#d9d9d9"></div>
<div class="a" style="left:886px;top:716px;width:15px;height:15px;background:#fff;border:1px solid #c6c6c6"></div>
<svg class="a" style="left:886px;top:716px" width="15" height="15"><path d="M9 3.5 L5 7.5 L9 11.5 Z" fill="#555"/></svg>
<div class="a" style="left:900px;top:716px;width:484px;height:15px;background:#fff;border:1px solid #c6c6c6"></div>
<div class="a" style="left:1411px;top:716px;width:15px;height:15px;background:#fff;border:1px solid #c6c6c6"></div>
<svg class="a" style="left:1411px;top:716px" width="15" height="15"><path d="M6 3.5 L10 7.5 L6 11.5 Z" fill="#555"/></svg>
<div class="a" style="left:0;top:737px;width:1447px;height:23px;background:#f3f3f3"></div>
<svg class="a" style="left:0;top:730px" width="30" height="30">
<rect x="10.8" y="14.3" width="11.6" height="9" rx="0.8" fill="#fff" stroke="#666" stroke-width="1"/>
<g fill="#777"><circle cx="13.8" cy="17" r="0.75"/><circle cx="16.6" cy="17" r="0.75"/><circle cx="19.4" cy="17" r="0.75"/>
<circle cx="13.8" cy="19.5" r="0.75"/><circle cx="16.6" cy="19.5" r="0.75"/><circle cx="19.4" cy="19.5" r="0.75"/>
<circle cx="13.8" cy="22" r="0.75"/><circle cx="16.6" cy="22" r="0.75"/><circle cx="19.4" cy="22" r="0.75"/></g>
<rect x="17" y="11.8" width="5.9" height="2.4" fill="#555"/>
<circle cx="12.2" cy="13.4" r="2.9" fill="#555" stroke="#f3f3f3" stroke-width="0.8"/>
</svg>
<div class="a" style="left:1129px;top:737px;width:40px;height:23px;background:#d2d2d2"></div>
<svg class="a" style="left:1129px;top:737px" width="318" height="23" fill="none" stroke="#666" stroke-width="1">
<rect x="14.5" y="4.5" width="12" height="12"/><path d="M14.5 8.5 H26.5 M14.5 12.5 H26.5 M18.5 4.5 V16.5 M22.5 4.5 V16.5"/>
<rect x="54.5" y="4.5" width="13" height="12"/><rect x="57.5" y="6.5" width="7" height="8"/><path d="M59 8.5 H63 M59 10.5 H63 M59 12.5 H63" stroke-width="0.9"/>
<rect x="93.5" y="4.5" width="14" height="12"/><path d="M96.5 4.5 V11.5 H101.5 V4.5 M99 4.5 V8"/>
<path d="M126.5 10.5 H133.5" stroke-width="1.3"/>
<path d="M139.5 10.5 H238.5" stroke="#aaa"/>
<rect x="187.5" y="5.5" width="4" height="11" fill="#666" stroke="none"/>
<path d="M243.5 10.5 H251.5 M247.5 6.5 V14.5" stroke-width="1.3"/>
</svg>
<span class="t" style="left:1396px;top:741px;font-size:13px;color:#333;transform:scaleX(0.9323);">100%</span>
<div class="a" style="left:0;top:64px;width:484px;height:2px;background:#1a6a3b"></div>
<div class="a" style="left:534px;top:64px;width:913px;height:2px;background:#1a6a3b"></div>
<div class="a" style="left:484px;top:36px;width:50px;height:31px;background:#f3f3f3;border:1px solid #fff;border-bottom:none"></div>
<span class="t j" style="left:497px;top:44px;font-size:12px;color:#217346">開発</span>
<div class="a" style="left:2px;top:66px;width:1443px;height:1px;background:#fff"></div>
<div class="a" style="left:2px;top:66px;width:1px;height:145px;background:#fff"></div>
<div class="a" style="left:1445px;top:66px;width:1px;height:693px;background:#fff"></div>
<div class="a" style="left:2px;top:736px;width:1443px;height:1px;background:#d4d4d4"></div>
<div class="a" style="left:2px;top:758px;width:1443px;height:1px;background:#fff"></div>
<div class="a" style="left:0;top:1px;width:1px;height:759px;background:#6c9c82"></div>
<div class="a" style="left:1px;top:66px;width:1px;height:693px;background:#559a72"></div>
<div class="a" style="left:1446px;top:1px;width:1px;height:759px;background:#8ab8a0"></div>
<div class="a" style="left:0;top:759px;width:1447px;height:1px;background:#217346"></div>
</body></html>
